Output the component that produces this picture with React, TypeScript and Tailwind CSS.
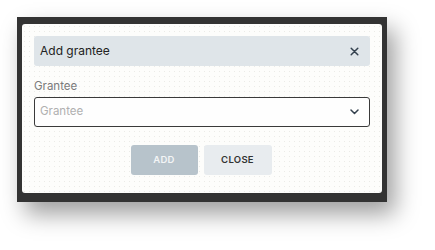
import React from "react";

export default function App() {
  return (
    <div className="w-[435px] h-[250px] bg-white pt-[17px] pl-[17px] [font-family:Inter,'Noto_Sans',sans-serif]">
      <div className="w-[370px] h-[185px] bg-[#333333] pt-[7px] pb-[9px] px-[5px] shadow-[8px_12px_22px_rgba(0,0,0,0.38)]">
        <div className="h-full rounded-[3px] bg-[#fdfdfb] bg-[radial-gradient(#ebebe7_0.6px,transparent_0.7px)] bg-[size:5px_5px] px-3 pt-3">
          <div className="h-[30px] rounded-[3px] bg-[#dfe5e9] flex items-center justify-between pl-[6px] pr-[11px]">
            <span className="text-[12px] text-[#222]">Add grantee</span>
            <svg width="9" height="9" viewBox="0 0 9 9">
              <path d="M1.2 1.2L7.8 7.8M7.8 1.2L1.2 7.8" stroke="#34414e" strokeWidth="1.5" strokeLinecap="round" />
            </svg>
          </div>
          <div className="mt-[13px] text-[11.5px] leading-[14px] text-[#7b7b7b]">Grantee</div>
          <div className="mt-[4px] h-[30px] rounded-[3px] border border-[#3a3a3a] bg-[#fefefe] flex items-center justify-between pl-[5px] pr-[10px]">
            <span className="text-[11.5px] text-[#b0b0b0]">Grantee</span>
            <svg width="9" height="6" viewBox="0 0 9 6">
              <path d="M1 1L4.5 4.5L8 1" stroke="#34414e" strokeWidth="1.5" fill="none" strokeLinecap="round" strokeLinejoin="round" />
            </svg>
          </div>
          <div className="mt-[18px] flex justify-center gap-[6px] pr-[2px]">
            <button className="w-[67px] h-[30px] rounded-[3px] bg-[#b7c3cb] text-[9.5px] tracking-[0.3px] font-semibold text-[#f3f5f6]">ADD</button>
            <button className="w-[68px] h-[30px] rounded-[3px] bg-[#e8ecef] text-[9.5px] tracking-[0.3px] font-semibold text-[#333]">CLOSE</button>
          </div>
        </div>
      </div>
    </div>
  );
}
